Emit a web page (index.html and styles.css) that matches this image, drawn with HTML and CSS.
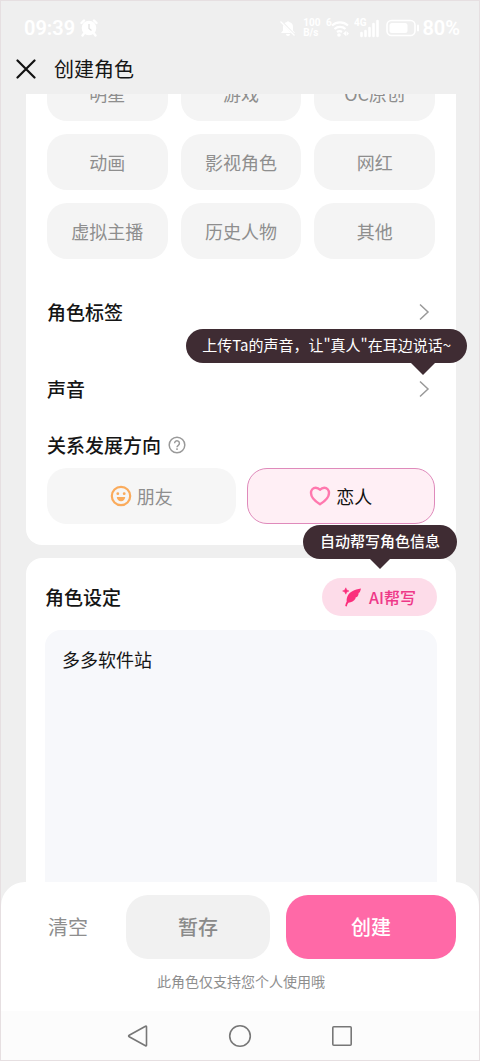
FILE: index.html
```html
<!DOCTYPE html>
<html lang="zh-CN">
<head>
<meta charset="utf-8">
<meta name="viewport" content="width=device-width, initial-scale=1">
<title>创建角色</title>
<link rel="stylesheet" href="styles.css">
</head>
<body>
<div class="status">
  <span class="status-text">09:39</span>
  <svg class="alarm" width="18" height="18" viewBox="0 0 18 18"><circle cx="9" cy="9" r="7.300" fill="#fff"/><path d="M1.500 4 4 1.500M16.500 4 14 1.500M4 14.500 2.500 16.500M14 14.500l1.500 2" stroke="#fff" stroke-width="2.400" stroke-linecap="round"/><path d="M9 5v4.500l2.500 2" fill="none" stroke="#e2e2e2" stroke-width="1.300"/></svg>
  <div class="status-right">
    <svg width="18" height="18" viewBox="0 0 18 18"><path d="M2 14 4 11.500V8a5 5 0 0 1 3.800-5 1.300 1.300 0 0 1 2.400 0A5 5 0 0 1 14 8v3.500l2 2.500zM7 15h4a2 2 0 0 1-4 0z" fill="#fff"/><path d="m2.500 2.500 14 14.500" stroke="#efefef" stroke-width="2.200"/><path d="m1.500 2.500 14 14" stroke="#fff" stroke-width="1.200"/></svg>
    <span class="speed">100<br>B/s</span>
    <svg class="wifi" width="24" height="20" viewBox="0 0 24 20"><text x="0" y="8" class="tiny">6</text><path d="M6 7.500a12 12 0 0 1 16 0M8.500 11a8 8 0 0 1 11 0M11 14a4.500 4.500 0 0 1 5 0" fill="none" stroke="#fff" stroke-width="2.200"/><circle cx="13" cy="17" r="1.800" fill="#fff"/><path d="m20 13-3 2.500 3 2.500zM20.500 13l2.500 2.500-2.500 2.500z" fill="#fff"/></svg>
    <svg class="signal" width="26" height="20" viewBox="0 0 26 20"><text x="0" y="8" class="tiny">4G</text><path d="M7.500 18v-3M11.500 18v-5M15.500 18V10M19.500 18V6M23.500 18V3" stroke="#fff" stroke-width="2.600" stroke-linecap="round"/></svg>
    <svg class="battery" width="34" height="18" viewBox="0 0 34 18"><rect x="1" y="1.500" width="28" height="15" rx="4.500" fill="none" stroke="#fff" stroke-width="1.600"/><rect x="3.500" y="4" width="18" height="10" rx="2.500" fill="#fff"/><path d="M32 6.500v5" stroke="#fff" stroke-width="2" stroke-linecap="round"/></svg>
    <span class="status-text">80%</span>
  </div>
</div>
<header class="header">
  <button class="close" aria-label="关闭"><svg width="20" height="20" viewBox="0 0 20 20"><path d="m1.500 1.500 17 17m0-17-17 17" stroke="#111" stroke-width="2.200" stroke-linecap="round"/></svg></button>
  <h1 class="title">创建角色</h1>
</header>
<main class="main">
  <section class="card">
    <div class="chips">
      <button class="chip">明星</button><button class="chip">游戏</button><button class="chip">OC原创</button>
      <button class="chip">动画</button><button class="chip">影视角色</button><button class="chip">网红</button>
      <button class="chip">虚拟主播</button><button class="chip">历史人物</button><button class="chip">其他</button>
    </div>
    <div class="row">
      <button class="row-button">角色标签<svg width="12" height="18" viewBox="0 0 12 18"><path d="m2 1.500 8 7.500-8 7.500" fill="none" stroke="#999" stroke-width="1.500"/></svg></button>
    </div>
    <div class="row">
      <button class="row-button">声音<svg width="12" height="18" viewBox="0 0 12 18"><path d="m2 1.500 8 7.500-8 7.500" fill="none" stroke="#999" stroke-width="1.500"/></svg></button>
      <div class="tip tip-voice" role="tooltip">上传Ta的声音，让"真人"在耳边说话~</div>
    </div>
    <div class="direction">
      <h2 class="heading">关系发展方向</h2>
      <button class="help" aria-label="说明"><svg width="18" height="18" viewBox="0 0 18 18" fill="none" stroke="#999" stroke-width="1.500"><circle cx="9" cy="9" r="7.800"/><path d="M6.600 7.300a2.400 2.400 0 1 1 3.700 2c-.9.600-1.300 1-1.300 1.900"/><path d="M9 12.300v1.600"/></svg></button>
    </div>
    <div class="options">
      <button class="option"><svg width="22" height="22" viewBox="0 0 22 22"><circle cx="11" cy="11" r="9.200" fill="none" stroke="#faab5c" stroke-width="2.200"/><circle cx="7.800" cy="8.700" r="1.400" fill="#faab5c"/><circle cx="14.200" cy="8.700" r="1.400" fill="#faab5c"/><path d="M6.800 12h8.400a4.200 4.200 0 0 1-8.400 0z" fill="#faab5c"/></svg>朋友</button>
      <button class="option selected" aria-pressed="true"><svg width="22" height="22" viewBox="0 0 22 22"><path d="M11 19.200C8.500 17.700 2 13.200 2 8 2 5 4 2.700 6.700 2.700c1.900 0 3.200.8 4.300 2.100 1.100-1.300 2.400-2.100 4.300-2.100C18 2.700 20 5 20 8c0 5.200-6.500 9.700-9 11.200z" fill="none" stroke="#ff78ae" stroke-width="2.400" stroke-linejoin="round"/></svg>恋人</button>
    </div>
  </section>
  <section class="card setting">
    <div class="setting-head">
      <h2 class="heading"><label for="setting">角色设定</label></h2>
      <button class="ai"><svg width="20" height="20" viewBox="0 0 20 20" fill="#fb2f7c"><path d="M19 1.500C12.500 2.500 7 5 5.400 9.500 4.600 11.700 4.500 13 4.800 14.200 4 15.800 3.500 17.300 3.200 19l1.600.4c.3-1.500.8-2.700 1.600-3.600 3-.4 5.700-1.700 7-4l.2-1.400 1.700-.7c1-1.200 1.300-2.400 1.300-3.700l1.200-.8c.5-1.200.8-2.300 1.200-3.700z"/><path d="M3.800.800 4.800 3 7 4 4.800 5 3.800 7.200 2.800 5 .6 4 2.800 3z" stroke="#fb2f7c" stroke-width=".5"/></svg>AI帮写</button>
      <div class="tip tip-ai" role="tooltip">自动帮写角色信息</div>
    </div>
    <textarea id="setting" class="editor">多多软件站</textarea>
  </section>
</main>
<footer class="footer">
  <div class="actions">
    <button class="action clear">清空</button>
    <button class="action draft">暂存</button>
    <button class="action create">创建</button>
  </div>
  <p class="note">此角色仅支持您个人使用哦</p>
</footer>
<nav class="nav">
  <button aria-label="返回"><svg width="24" height="24" viewBox="0 0 24 24"><path d="M20.500 2.800v18.400q0 1-1 .5L3.200 12.800q-1.200-.8 0-1.600L19.500 2.300q1-.5 1 .5z"/></svg></button>
  <button aria-label="主页"><svg width="24" height="24" viewBox="0 0 24 24"><circle cx="12" cy="12" r="10.300"/></svg></button>
  <button aria-label="最近任务"><svg width="24" height="24" viewBox="0 0 24 24"><rect x="2.800" y="2.800" width="18.400" height="18.400" rx="1"/></svg></button>
</nav>
</body>
</html>
```
FILE: styles.css
```css
* {
  box-sizing: border-box;
}

body {
  margin: 0;
  height: 100vh;
  display: flex;
  flex-direction: column;
  overflow: hidden;
  background: #efefef;
  border: 1px solid #e6dfe1;
  color: #151515;
  font-family: "Noto Sans CJK SC", "Noto Sans", sans-serif;
}

button {
  display: flex;
  align-items: center;
  justify-content: center;
  margin: 0;
  padding: 0;
  border: 0;
  background: none;
  color: inherit;
  font-family: inherit;
}

svg {
  display: block;
  flex: none;
}

.status {
  flex: none;
  height: 49px;
  padding: 4px 19px 0 23px;
  display: flex;
  align-items: center;
  color: #fff;
  font-family: Roboto, sans-serif;
}

.status-text {
  font-size: 20px;
  font-weight: 600;
}

.alarm {
  margin-left: 5px;
}

.status-right {
  margin-left: auto;
  display: flex;
  align-items: center;
}

.speed {
  margin: 0 6px;
  font-size: 10px;
  font-weight: 700;
  line-height: 10px;
}

.tiny {
  fill: #fff;
  font-size: 10px;
  font-weight: 700;
}

.signal {
  margin: 0 6px 0 4px;
}

.battery {
  margin-right: 2px;
}

.header {
  flex: none;
  height: 44px;
  padding: 0 15px 6px;
  display: flex;
  align-items: center;
  gap: 18px;
}

.title {
  margin: 0;
  font-size: 20px;
  font-weight: 400;
  line-height: 30px;
}

.main {
  flex: 1;
  min-height: 0;
  padding: 0 23px 0 25px;
  display: flex;
  flex-direction: column;
  gap: 13px;
  overflow: hidden;
}

.card {
  padding: 0 21px 21px;
  background: #fff;
  border-radius: 0 0 16px 16px;
}

.chips {
  margin: -29px 0 14px;
  display: grid;
  grid-template-columns: repeat(3, 1fr);
  gap: 13px;
}

.chip {
  height: 56px;
  border-radius: 20px;
  background: #f4f4f4;
  color: #8e8e8e;
  font-size: 18px;
}

.row {
  position: relative;
}

.row-button {
  width: 100%;
  height: 77px;
  padding-right: 5px;
  justify-content: space-between;
  font-size: 19px;
  font-weight: 500;
}

.heading {
  margin: 0;
  font-size: 19px;
  font-weight: 500;
  line-height: 34px;
}

.direction {
  padding-top: 1px;
  display: flex;
  align-items: center;
  gap: 7px;
}

.options {
  margin-top: 6px;
  display: grid;
  grid-template-columns: 1fr 1fr;
  gap: 11px;
}

.option {
  height: 56px;
  gap: 5px;
  border-radius: 20px;
  background: #f6f6f6;
  color: #8e8e8e;
  font-size: 18px;
}

.selected {
  border: 1px solid #df8abb;
  background: #ffeff5;
  color: #111;
}

.tip {
  position: absolute;
  z-index: 1;
  padding: 0 16px 2px;
  border-radius: 17px;
  background: #3f2c33;
  color: #fff;
  font-size: 15px;
  line-height: 32px;
  white-space: nowrap;
}

.tip::after {
  content: "";
  position: absolute;
  top: 100%;
  border: solid transparent;
  border-top-color: #3f2c33;
  border-bottom-width: 0;
}

.tip-voice {
  top: -21px;
  right: -32px;
}

.tip-voice::after {
  right: 32px;
  border-width: 12px 12px 0;
}

.tip-ai {
  top: -53px;
  right: -20px;
  padding: 0 17px 2px;
  font-weight: 500;
}

.tip-ai::after {
  left: 50%;
  margin-left: -10px;
  border-width: 10px 10px 0;
}

.setting {
  flex: 1;
  min-height: 0;
  padding: 20px 19px 0;
  display: flex;
  flex-direction: column;
  gap: 14px;
  border-radius: 16px 16px 0 0;
}

.setting-head {
  position: relative;
  display: flex;
  align-items: center;
  justify-content: space-between;
}

.ai {
  height: 38px;
  padding: 0 21px 0 20px;
  gap: 7px;
  border-radius: 19px;
  background: #fddce9;
  color: #ee3888;
  font-size: 16px;
  font-weight: 500;
}

.editor {
  flex: 1;
  width: 100%;
  padding: 15px 17px;
  border: 0;
  border-radius: 16px 16px 0 0;
  background: #f7f8fb;
  color: #151515;
  font-family: inherit;
  font-size: 18px;
  line-height: 28px;
  resize: none;
  outline: none;
}

/* Rides up over the form so that its rounded corners show the form behind. */
.footer {
  position: relative;
  flex: none;
  margin-top: -24px;
  padding: 13px 23px 19px 25px;
  border-radius: 24px 24px 0 0;
  background: #fff;
}

.actions {
  display: grid;
  grid-template-columns: 84fr 144fr 170fr;
  gap: 16px;
}

.action {
  height: 64px;
  padding-bottom: 2px;
  border-radius: 22px;
  font-size: 20px;
}

.clear {
  color: #8e8e8e;
}

.draft {
  background: #f1f1f1;
  color: #8a8a8a;
  font-weight: 500;
}

.create {
  background: #ff69a7;
  color: #fff;
  font-weight: 500;
}

.note {
  margin: 11px 0 0;
  color: #8e8e8e;
  font-size: 14px;
  line-height: 22px;
  text-align: center;
}

.nav {
  flex: none;
  height: 49px;
  display: flex;
  align-items: center;
  justify-content: center;
  gap: 78px;
  background: #fcfcfc;
}

.nav svg {
  fill: none;
  stroke: #777;
  stroke-width: 1.6px;
}
```
